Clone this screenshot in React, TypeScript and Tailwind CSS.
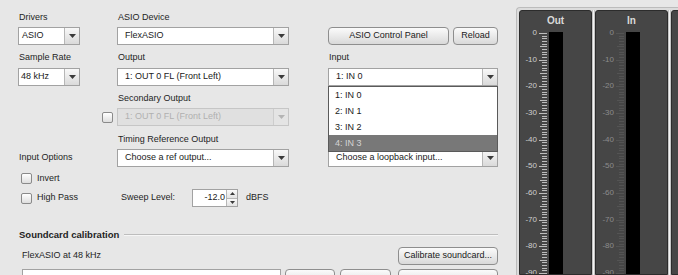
import React from "react";
import clsx from "clsx";

const Tri = ({ color = "#3a3a3a" }: { color?: string }) => (
  <svg width="7" height="4" viewBox="0 0 7 4">
    <path d="M0 0 L7 0 L3.5 4 Z" fill={color} />
  </svg>
);

const Select = ({
  className,
  text,
  textClass = "pl-[7px]",
  disabled = false,
}: {
  className?: string;
  text: string;
  textClass?: string;
  disabled?: boolean;
}) => (
  <div
    className={clsx(
      "flex h-[18px] border",
      disabled ? "border-[#c6c6c6] bg-[#e0e0e0]" : "border-[#a2a2a2] bg-white",
      className
    )}
  >
    <div
      className={clsx(
        "flex-1 flex items-center whitespace-nowrap overflow-hidden",
        textClass,
        disabled ? "text-[#b0b0b0]" : "text-[#1a1a1a]"
      )}
    >
      {text}
    </div>
    <div
      className={clsx(
        "w-[15px] flex items-center justify-center border-l",
        disabled
          ? "border-[#cdcdcd] bg-[#e4e4e4]"
          : "border-[#b6b6b6] bg-gradient-to-b from-[#f8f8f8] to-[#dadada]"
      )}
    >
      <Tri color={disabled ? "#b4b4b4" : "#3a3a3a"} />
    </div>
  </div>
);

const Button = ({ className, children }: { className?: string; children?: React.ReactNode }) => (
  <div
    className={clsx(
      "h-[18px] flex items-center justify-center rounded-[4px] border border-[#8e8e8e] bg-gradient-to-b from-[#fbfbfb] to-[#d9d9d9] text-[#1a1a1a] whitespace-nowrap",
      className
    )}
  >
    {children}
  </div>
);

const Check = ({ className }: { className?: string }) => (
  <div
    className={clsx(
      "w-[11px] h-[11px] shrink-0 rounded-[2px] border border-[#8a8a8a] bg-gradient-to-b from-[#ffffff] to-[#dedede]",
      className
    )}
  />
);

const Label = ({ children, className }: { children: React.ReactNode; className?: string }) => (
  <div className={clsx("h-[11px] leading-[11px] pl-[1px] whitespace-nowrap text-[#1e1e1e]", className)}>
    {children}
  </div>
);

const Meter = ({ title, dim, blank }: { title: string; dim?: boolean; blank?: boolean }) => {
  const labels = Array.from({ length: 10 }, (_, i) => i);
  const ticks = Array.from({ length: 93 }, (_, i) => i);
  const lx = dim ? 18 : 17;
  const bx = dim ? 30 : 29;
  const off = 8;
  return (
    <div className="w-[73px] shrink-0 flex flex-col border border-[#2c2c2c] rounded-t-[3px] bg-[#464646]">
      <div className="h-[12px] leading-[20px] text-center text-[10px] font-bold text-[#dadada] overflow-visible">{title}</div>
      {!blank && (
        <svg width="71" height="258" className="block">
          <rect x={bx} y={1 + off} width={14} height={249} fill="#000" />
          {ticks.map((d) => {
            const y = Math.round(2 + off + d * 2.6667) + 0.5;
            const x1 = d % 10 === 0 ? lx + 2 : d % 5 === 0 ? lx + 3 : lx + 5;
            return (
              <line
                key={d}
                x1={x1}
                x2={lx + 10}
                y1={y}
                y2={y}
                stroke={dim ? "#545454" : "#bdbdbd"}
                strokeWidth={1}
              />
            );
          })}
          {labels.map((i) => (
            <text
              key={i}
              x={lx}
              y={2 + off + i * 26.667}
              textAnchor="end"
              dominantBaseline="middle"
              fontSize="8"
              fontFamily="Liberation Sans, Arial, sans-serif"
              fill={dim ? "#8c8c8c" : "#cfcfcf"}
            >
              {i === 0 ? "0" : `-${i * 10}`}
            </text>
          ))}
        </svg>
      )}
    </div>
  );
};

const Sep = () => <div className="w-[3px] shrink-0 border-x border-[#c4c4c4] bg-[#f3f3f3]" />;

export default function App() {
  return (
    <div className="flex w-[678px] h-[275px] overflow-hidden bg-[#e7e7e7] text-[9px] font-['Liberation_Sans',Arial,sans-serif]">
      {/* Left panel */}
      <div className="w-[516px] shrink-0 flex flex-col">
        {/* Top block */}
        <div className="flex pl-[18px] pt-[12px]">
          <div className="w-[62px] flex flex-col">
            <Label>Drivers</Label>
            <Select className="mt-[4px] w-[62px]" text="ASIO" textClass="pl-[3px]" />
            <Label className="mt-[7px]">Sample Rate</Label>
            <Select className="mt-[5px] w-[62px]" text="48 kHz" textClass="pl-[2px]" />
            <Label className="mt-[66px]">Input Options</Label>
          </div>
          <div className="ml-[37px] w-[172px] flex flex-col">
            <Label>ASIO Device</Label>
            <Select className="mt-[4px]" text="FlexASIO" />
            <Label className="mt-[7px]">Output</Label>
            <Select className="mt-[5px]" text="1: OUT 0 FL (Front Left)" />
            <Label className="mt-[7px]">Secondary Output</Label>
            <div className="mt-[4px] flex items-center ml-[-15px]">
              <Check className="mr-[4px]" />
              <Select className="flex-1" text="1: OUT 0 FL (Front Left)" disabled />
            </div>
            <Label className="mt-[8px]">Timing Reference Output</Label>
            <Select className="mt-[4px]" text="Choose a ref output..." />
          </div>
          <div className="ml-[39px] w-[170px] flex flex-col">
            <div className="mt-[15px] flex">
              <Button className="w-[121px]">ASIO Control Panel</Button>
              <Button className="ml-[4px] w-[45px]">Reload</Button>
            </div>
            <Label className="mt-[7px]">Input</Label>
            <div className="relative mt-[5px]">
              <Select text="1: IN 0" />
              <div className="absolute left-0 top-[18px] w-[170px] z-10 border border-[#5a5a5a] bg-white flex flex-col">
                <div className="h-[16px] leading-[16px] pl-[6px] text-[#1a1a1a]">1: IN 0</div>
                <div className="h-[16px] leading-[16px] pl-[6px] text-[#1a1a1a]">2: IN 1</div>
                <div className="h-[16px] leading-[16px] pl-[6px] text-[#1a1a1a]">3: IN 2</div>
                <div className="h-[16px] leading-[16px] pl-[6px] bg-[#787878] text-[#d4d4d4]">4: IN 3</div>
              </div>
            </div>
            <Select className="mt-[63px]" text="Choose a loopback input..." />
          </div>
        </div>

        {/* Input options */}
        <div className="pl-[21px] mt-[6px] flex items-center h-[11px]">
          <Check />
          <span className="ml-[5px] text-[#1e1e1e]">Invert</span>
        </div>
        <div className="pl-[21px] mt-[5px] flex items-center h-[18px]">
          <Check />
          <span className="ml-[5px] w-[80px] text-[#1e1e1e]">High Pass</span>
          <span className="ml-[4px] w-[71px] text-[#1e1e1e]">Sweep Level:</span>
          <div className="flex h-[18px] w-[46px] border border-[#a2a2a2] bg-white">
            <div className="flex-1 flex items-center justify-end pr-[1px] text-[#1a1a1a]">-12.0</div>
            <div className="w-[11px] flex flex-col border-l border-[#b6b6b6]">
              <div className="flex-1 flex items-center justify-center bg-gradient-to-b from-[#fafafa] to-[#e2e2e2] border-b border-[#b6b6b6]">
                <svg width="5" height="3" viewBox="0 0 5 3"><path d="M0 3 L5 3 L2.5 0 Z" fill="#3a3a3a" /></svg>
              </div>
              <div className="flex-1 flex items-center justify-center bg-gradient-to-b from-[#fafafa] to-[#e2e2e2]">
                <svg width="5" height="3" viewBox="0 0 5 3"><path d="M0 0 L5 0 L2.5 3 Z" fill="#3a3a3a" /></svg>
              </div>
            </div>
          </div>
          <span className="ml-[8px] text-[#1e1e1e]">dBFS</span>
        </div>

        {/* Soundcard calibration */}
        <div className="pl-[19px] mt-[22px] flex items-center h-[12px] pr-[18px]">
          <span className="font-bold text-[9.5px] text-[#1e1e1e] whitespace-nowrap">Soundcard calibration</span>
          <div className="ml-[5px] flex-1 h-[2px] border-t border-[#bdbdbd] border-b border-b-[#f6f6f6]" />
        </div>
        <div className="pl-[22px] mt-[6px] flex items-center h-[18px] pr-[18px]">
          <span className="flex-1 text-[#1e1e1e]">FlexASIO at 48 kHz</span>
          <Button className="w-[100px]">Calibrate soundcard...</Button>
        </div>
        <div className="pl-[22px] mt-[4px] flex h-[18px] pr-[18px]">
          <div className="w-[260px] h-[18px] border border-[#a2a2a2] bg-white" />
          <Button className="ml-[4px] w-[50px]" />
          <Button className="ml-[5px] w-[51px]" />
          <Button className="ml-[7px] w-[100px]" />
        </div>
      </div>

      {/* Meters */}
      <div className="flex-1 mt-[7px] flex border-l border-t border-[#bcbcbc] rounded-tl-[4px] bg-[#dcdcdc] pl-[2px] pt-[2px] overflow-hidden">
        <Meter title="Out" />
        <Sep />
        <Meter title="In" dim />
        <Sep />
        <Meter title="" dim blank />
      </div>
    </div>
  );
}
